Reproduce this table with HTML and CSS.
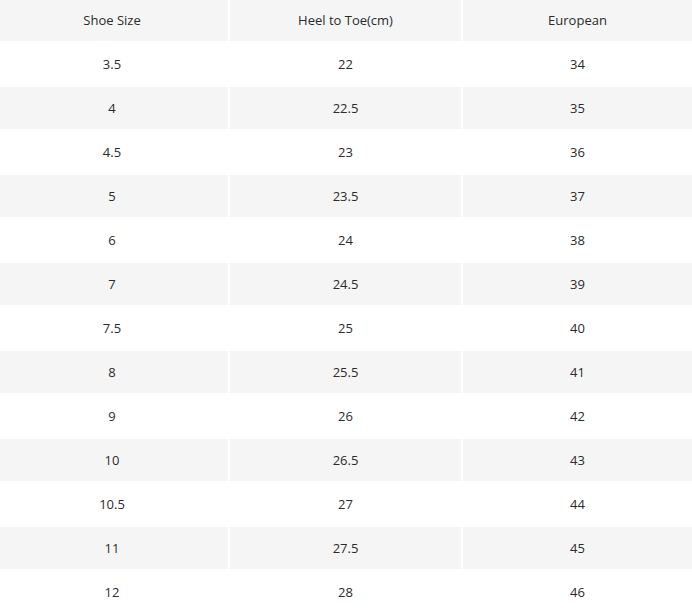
FILE: index.html
```html
<!DOCTYPE html>
<html>
<head>
<meta charset="utf-8">
<link rel="stylesheet" href="styles.css">
</head>
<body>
<table class="size-table">
  <colgroup>
    <col class="col-a">
    <col class="col-b">
    <col class="col-c">
  </colgroup>
  <thead>
    <tr><th>Shoe Size</th><th>Heel to Toe(cm)</th><th>European</th></tr>
  </thead>
  <tbody>
    <tr><td>3.5</td><td>22</td><td>34</td></tr>
    <tr><td>4</td><td>22.5</td><td>35</td></tr>
    <tr><td>4.5</td><td>23</td><td>36</td></tr>
    <tr><td>5</td><td>23.5</td><td>37</td></tr>
    <tr><td>6</td><td>24</td><td>38</td></tr>
    <tr><td>7</td><td>24.5</td><td>39</td></tr>
    <tr><td>7.5</td><td>25</td><td>40</td></tr>
    <tr><td>8</td><td>25.5</td><td>41</td></tr>
    <tr><td>9</td><td>26</td><td>42</td></tr>
    <tr><td>10</td><td>26.5</td><td>43</td></tr>
    <tr><td>10.5</td><td>27</td><td>44</td></tr>
    <tr><td>11</td><td>27.5</td><td>45</td></tr>
    <tr><td>12</td><td>28</td><td>46</td></tr>
  </tbody>
</table>
</body>
</html>
```

FILE: styles.css
```css
html, body {
  margin: 0;
  padding: 0;
  background: #ffffff;
}
body {
  font-family: "Open Sans", "DejaVu Sans", sans-serif;
  font-size: 13px;
  color: #2b2b2b;
  overflow: hidden;
}
.size-table {
  width: 700px;
  margin: -3px 0 0 -6px;
  border-collapse: separate;
  border-spacing: 2px;
  table-layout: fixed;
}
.col-a { width: 232px; }
.col-b { width: 231px; }
.col-c { width: 229px; }
.size-table th,
.size-table td {
  height: 42px;
  padding: 0;
  text-align: center;
  vertical-align: middle;
  font-weight: normal;
  line-height: 16px;
}
.size-table thead th {
  background: #f5f5f5;
}
.size-table tbody tr:nth-child(even) td {
  background: #f5f5f5;
}
```
